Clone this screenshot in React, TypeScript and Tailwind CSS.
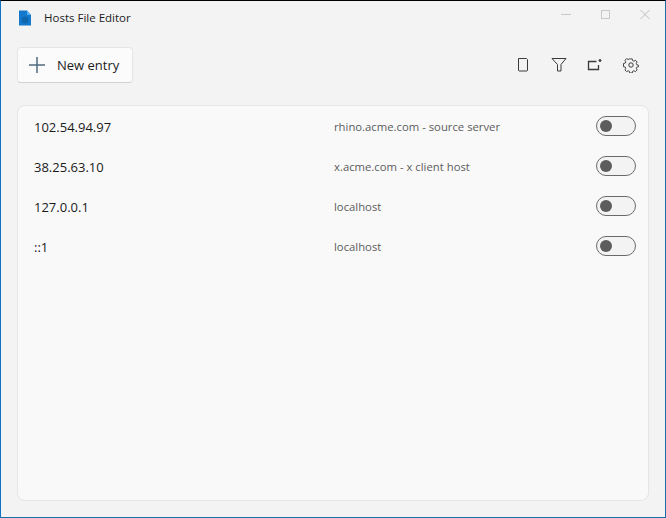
import { ReactNode } from "react";

const FONT = "font-['Open_Sans','Noto_Sans',sans-serif]";

const entries = [
  { address: "102.54.94.97", hosts: "rhino.acme.com - source server" },
  { address: "38.25.63.10", hosts: "x.acme.com - x client host" },
  { address: "127.0.0.1", hosts: "localhost" },
  { address: "::1", hosts: "localhost" },
];

const AppLogo = () => (
  <svg width="16" height="16" viewBox="0 0 16 16">
    <path d="M2 .5h8l4 4.500v10.500H2z" fill="#1479cc" />
    <path d="M10 .5l4 4.500h-4z" fill="#58b0ee" />
    <circle cx="8" cy="10" r="3.500" fill="#0f67b0" />
  </svg>
);

const ToolbarIcon = ({ children }: { children: ReactNode }) => (
  <button className="flex h-8 w-8 items-center justify-center pt-1">
    <svg width="16" height="16" viewBox="0 0 16 16" fill="none" stroke="#3a3a3a" strokeWidth="1">
      {children}
    </svg>
  </button>
);

const Toggle = () => (
  <div className="flex h-5 w-10 items-center rounded-full border border-[#6b6b6b] bg-[#f3f3f3] pl-[3px]">
    <div className="h-3 w-3 rounded-full bg-[#5c5c5c]" />
  </div>
);

const App = () => {
  return (
    <div
      className={`flex h-[518px] w-[666px] flex-col overflow-hidden border border-t-black border-r-[#1a6ea8] border-b-[#1a6ea8] border-l-[#0f72c4] bg-[#f3f3f3] ${FONT}`}
    >
      {/* Title bar */}
      <div className="flex h-[35px] items-center pb-[2px]">
        <div className="ml-[16px] flex w-[27px]">
          <AppLogo />
        </div>
        <span className="text-[11.5px] text-[#1b1b1b]">Hosts File Editor</span>
        <div className="ml-auto flex items-center gap-[30px] self-start pr-[15px] pt-[9px]">
          <div className="h-px w-[10px] bg-[#c8c8c8]" />
          <div className="h-[9px] w-[9px] border border-[#c8c8c8]" />
          <svg width="10" height="9" viewBox="0 0 10 9" stroke="#c0c0c0" strokeWidth="1">
            <path d="M.5 0l9 9M9.500 0l-9 9" />
          </svg>
        </div>
      </div>

      {/* Toolbar */}
      <div className="flex h-[69px] items-start justify-between pl-4 pr-[18px] pt-[11px]">
        <button className="flex h-9 w-[116px] items-center rounded-[4px] border border-[#e5e5e5] border-b-[#d0d0d0] bg-[#fbfbfb] pl-[11px] text-[13px] text-[#1b1b1b]">
          <svg width="16" height="16" viewBox="0 0 16 16" stroke="#4f6b80" strokeWidth="1.500">
            <path d="M8 0v16M0 8h16" />
          </svg>
          <span className="ml-[12px] pt-[2px]">New entry</span>
        </button>
        <div className="flex gap-1">
          <ToolbarIcon>
            <path d="M3.500 1.500h8l1 1v11l-.5.500H4l-.5-.5z" />
          </ToolbarIcon>
          <ToolbarIcon>
            <path d="M1 1.500h14l-5 6v6.500H6.500V7.500z" />
          </ToolbarIcon>
          <ToolbarIcon>
            <path d="M9.500 4.500H1.500v8h10V8" strokeWidth="1.300" />
            <circle cx="13" cy="3.500" r="1" fill="#3a3a3a" />
          </ToolbarIcon>
          <ToolbarIcon>
            <circle cx="8" cy="8" r="2.200" />
            <path d="M6.700 1.500h2.600l.4 1.800 1.400.6 1.600-.9 1.800 1.800-.9 1.600.6 1.400 1.800.4v1.600l-1.800.4-.6 1.400.9 1.600-1.800 1.800-1.600-.9-1.400.6-.4 1.800H6.700l-.4-1.800-1.400-.6-1.600.9-1.800-1.800.9-1.600-.6-1.400-1.800-.4V6.400l1.800-.4.6-1.400-.9-1.600 1.800-1.800 1.600.9 1.400-.6z" transform="translate(.5 .5) scale(.94)" />
          </ToolbarIcon>
        </div>
      </div>

      {/* Entries */}
      <div className="mx-4 mb-4 flex-1 rounded-lg border border-[#e5e5e5] bg-[#f9f9f9]">
        {entries.map((entry) => (
          <div key={entry.address} className="flex h-10 items-center pl-4 pr-3">
            <span className="w-[300px] pt-[3px] text-[13px] text-[#1b1b1b]">{entry.address}</span>
            <span className="pt-[2px] text-[11.3px] text-[#5c5c5c]">{entry.hosts}</span>
            <div className="ml-auto">
              <Toggle />
            </div>
          </div>
        ))}
      </div>
    </div>
  );
};

export default App;
